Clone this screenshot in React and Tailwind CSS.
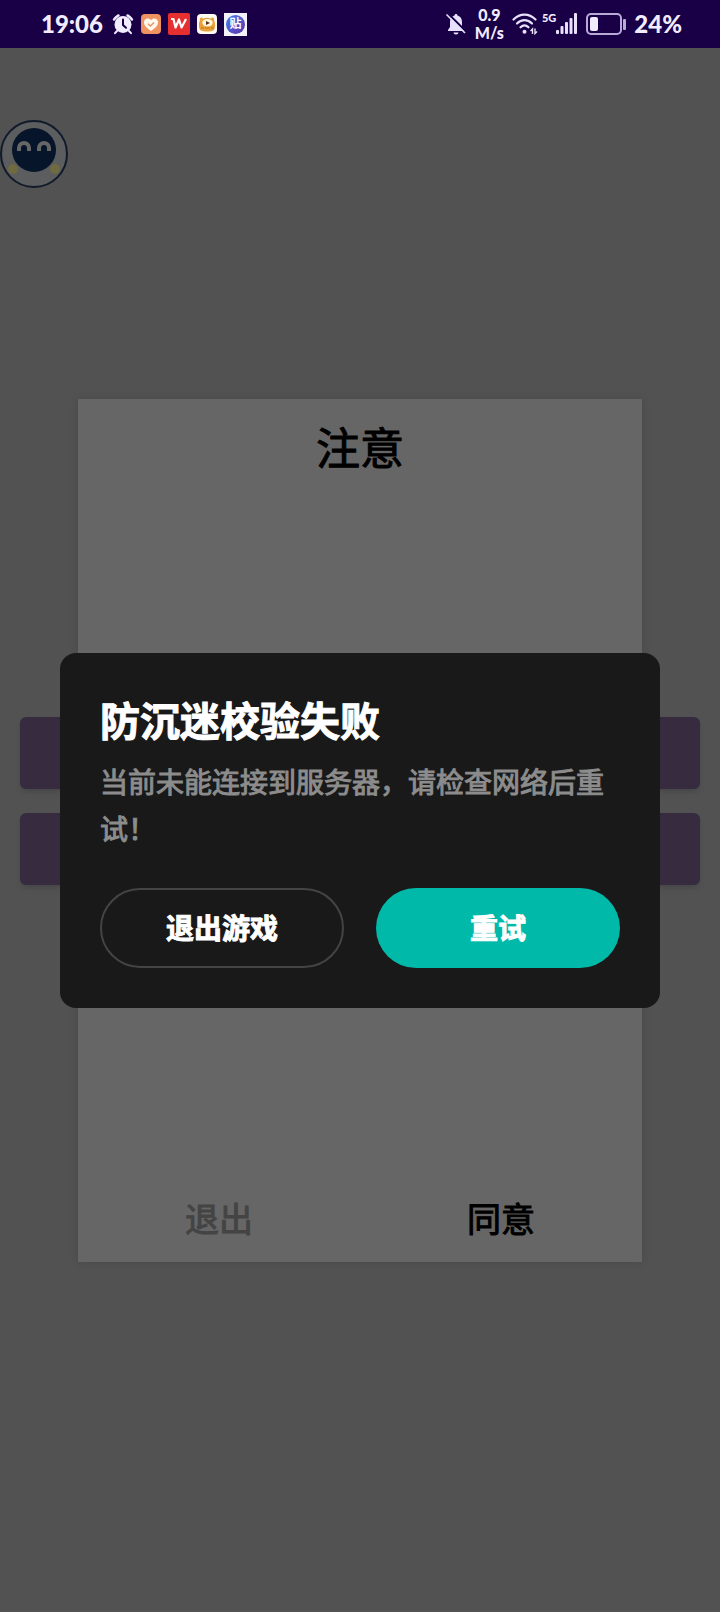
import { useState } from 'react';

function AlarmIcon() {
  return (
    <svg className="h-6 w-[22px]" viewBox="0 0 22 24" fill="none">
      <circle cx="11" cy="12.5" r="8.5" fill="#f1ecff" />
      <path d="M2 7.5A14 14 0 0 1 6.5 3.4M20 7.5A14 14 0 0 0 15.5 3.4" stroke="#f1ecff" strokeWidth="2.4" strokeLinecap="round" />
      <path d="M5 19l-2 2.2M17 19l2 2.2" stroke="#f1ecff" strokeWidth="2" strokeLinecap="round" />
      <path d="M11 7.5v5.5l3 2.8" stroke="#190046" strokeWidth="2" strokeLinecap="round" />
    </svg>
  );
}

function HealthIcon() {
  return (
    <svg className="size-5" viewBox="0 0 20 20" fill="none">
      <rect width="20" height="20" rx="4" fill="#ef9360" />
      <path d="M10 17C5 13.5 3 11.3 3 8.3C3 6 4.7 4.6 6.6 4.6C8 4.6 9.3 5.2 10 6.3C10.7 5.2 12 4.6 13.4 4.6C15.3 4.6 17 6 17 8.3C17 11.3 15 13.5 10 17Z" fill="#fff8ee" />
      <path d="M7 9.8l2.3 2.2L13 8.5" stroke="#ef9360" strokeWidth="1.5" />
    </svg>
  );
}

function OfficeIcon() {
  return (
    <svg className="size-[22px]" viewBox="0 0 22 22" fill="none">
      <rect width="22" height="22" rx="2" fill="#e5302f" />
      <path d="M3 6H5.5L7.5 14.5L11 6.500L13.500 14.5L18 6" stroke="#fff" strokeWidth="2.2" strokeLinejoin="round" />
    </svg>
  );
}

function TigerIcon() {
  return (
    <svg className="size-5" viewBox="0 0 20 20" fill="none">
      <rect width="20" height="20" rx="4" fill="#fdfaf4" />
      <path d="M3 6C2 3.5 5 2.5 6 4.5C8.5 3.5 11.5 3.5 14 4.5C15 2.5 18 3.5 17 6C18.5 9 18.5 13 17 16C13 18 7 18 3 16C1.5 13 1.5 9 3 6Z" fill="#e9a23a" />
      <ellipse cx="10.5" cy="8.8" rx="5.2" ry="3.8" fill="#fff6df" />
      <path d="M9 7l4 2l-4 2Z" fill="#5b3413" />
      <path d="M4 14h3M14 14h3M8 14h5" stroke="#b8741d" strokeWidth="1.2" />
    </svg>
  );
}

function ForumIcon() {
  return (
    <span className="flex size-[23px] items-center justify-center bg-[#f4f2fb]">
      <span className="flex size-[19px] items-center justify-center rounded-full bg-linear-to-br from-[#3b7cf0] to-[#5a2fa8] text-xs font-bold text-white">
        贴
      </span>
    </span>
  );
}

function MutedBellIcon() {
  return (
    <svg className="h-6 w-[22px]" viewBox="0 0 22 24" fill="none">
      <path d="M11 2C11.9 2 12.5 2.6 12.5 3.5C15.5 4.3 17 6.7 17 10V15L19 18V19H3V18L5 15V10C5 6.7 6.5 4.3 9.5 3.5C9.5 2.6 10.1 2 11 2Z" fill="#e8e1fb" />
      <path d="M8.5 20.5h5a2.5 2 0 0 1-5 0Z" fill="#e8e1fb" />
      <path d="M3 1.5L21.5 20" stroke="#190046" strokeWidth="2" />
      <path d="M1.5 2.5L20 21" stroke="#e8e1fb" strokeWidth="1.6" />
    </svg>
  );
}

function WifiIcon() {
  return (
    <svg className="h-6 w-[26px]" viewBox="0 0 26 24" fill="none">
      <g stroke="#e8e1fb" strokeWidth="2.2" strokeLinecap="round">
        <path d="M1.5 7.5C8 1 17 1 23.5 7.5" />
        <path d="M5 11.5C9.5 7 15.5 7 20 11.5" />
        <path d="M8.5 15.3C11 12.8 14 12.8 16.5 15.3" />
      </g>
      <circle cx="12.5" cy="19.8" r="2" fill="#e8e1fb" />
      <path d="M20.5 22v-5l-2 2M23 16.5v5l2-2" stroke="#e8e1fb" strokeWidth="1.4" />
    </svg>
  );
}

function SignalIcon() {
  return (
    <svg className="h-[22px] w-[22px]" viewBox="0 0 22 22" fill="#e8e1fb">
      <rect x="0" y="17" width="3" height="4" rx="1" />
      <rect x="4.5" y="13" width="3" height="8" rx="1" />
      <rect x="9" y="9" width="3" height="12" rx="1" />
      <rect x="13.5" y="5" width="3" height="16" rx="1" />
      <rect x="18" y="0" width="3" height="21" rx="1" />
    </svg>
  );
}

function BatteryIcon() {
  return (
    <svg className="h-[22px] w-10" viewBox="0 0 40 22" fill="none">
      <rect x="1" y="1" width="34" height="20" rx="4" stroke="#b9aad6" strokeWidth="2" />
      <rect x="4" y="4" width="8" height="14" rx="2" fill="#f1ecff" />
      <rect x="37" y="6" width="3" height="11" rx="1" fill="#b9aad6" />
    </svg>
  );
}

function StatusBar() {
  return (
    <header className="flex h-12 items-center justify-between bg-[#190046] pr-[38px] pl-[41px] text-[#f1ecff]">
      <div className="flex items-center gap-[7px]">
        <time className="w-16 font-[Lato,sans-serif] text-2xl leading-6 font-black">19:06</time>
        <AlarmIcon />
        <HealthIcon />
        <OfficeIcon />
        <TigerIcon />
        <ForumIcon />
      </div>
      <div className="flex items-center font-[Lato,sans-serif] font-black">
        <MutedBellIcon />
        <div className="mx-2 text-center text-base leading-[18px]">
          <p>0.9</p>
          <p>M/s</p>
        </div>
        <WifiIcon />
        <span className="mt-1 ml-1 self-start text-[11px] leading-4">5G</span>
        <SignalIcon />
        <span className="mr-2 ml-2">
          <BatteryIcon />
        </span>
        <span className="text-2xl leading-6">24%</span>
      </div>
    </header>
  );
}

function FloatingAvatar() {
  return (
    <svg className="size-[68px]" viewBox="0 0 68 68" fill="none">
      <circle cx="34" cy="34" r="33" fill="#5b5d5e" stroke="#101a2a" strokeWidth="2" />
      <circle cx="13" cy="49" r="5" fill="#6f6a40" />
      <circle cx="55" cy="49" r="5" fill="#6f6a40" />
      <circle cx="34" cy="30" r="22" fill="#07152a" />
      <path d="M19 31v-3a5 5 0 0 1 10 0v3M39 31v-3a5 5 0 0 1 10 0v3" stroke="#666" strokeWidth="4" />
    </svg>
  );
}

function NoticeCard() {
  return (
    <section className="mx-[78px] flex h-[863px] flex-col justify-between self-center bg-[#666] shadow-[0_0_8px_rgba(0,0,0,0.12)] [grid-area:1/1]">
      <h2 className="pt-4 text-center text-[44px] leading-[66px] text-black [-webkit-text-stroke:1px]">注意</h2>
      <div className="grid h-[84px] grid-cols-2 text-[34px] [-webkit-text-stroke:1px]">
        <button className="text-[#444]">退出</button>
        <button className="text-black">同意</button>
      </div>
    </section>
  );
}

function RetryDialog({ onExit, onRetry }) {
  return (
    <div
      role="alertdialog"
      aria-labelledby="dialog-title"
      aria-describedby="dialog-text"
      className="z-10 mx-[60px] self-center rounded-2xl bg-[#191919] p-10 [grid-area:1/1]"
    >
      <h1 id="dialog-title" className="text-[40px] leading-[56px] font-bold text-white [-webkit-text-stroke:1px]">
        防沉迷校验失败
      </h1>
      <p id="dialog-text" className="mt-[10px] text-[28px] leading-[47px] text-[#8c8c8c] [-webkit-text-stroke:1px]">
        当前未能连接到服务器，请检查网络后重试！
      </p>
      <div className="mt-[35px] grid grid-cols-2 gap-8 text-[28px] font-bold text-white [-webkit-text-stroke:1px]">
        <button onClick={onExit} className="h-20 rounded-full border-2 border-[#444]">
          退出游戏
        </button>
        <button onClick={onRetry} className="h-20 rounded-full bg-[#00b9a9]">
          重试
        </button>
      </div>
    </div>
  );
}

export default function App() {
  const [open, setOpen] = useState(true);

  return (
    <div className='flex min-h-screen flex-col bg-[#525252] font-["Noto_Sans","Noto_Sans_CJK_SC",sans-serif]'>
      <StatusBar />
      <main className="grid flex-1 grid-cols-1">
        <div className="pt-[72px] [grid-area:1/1]">
          <FloatingAvatar />
        </div>
        {/* page actions, mostly hidden behind the notice */}
        <div className="mb-[58px] flex flex-col gap-6 self-center px-5 [grid-area:1/1]">
          <button aria-label="开始" className="h-[72px] rounded-md bg-[#372c3f] shadow-md" />
          <button aria-label="设置" className="h-[72px] rounded-md bg-[#372c3f] shadow-md" />
        </div>
        <NoticeCard />
        {open && <RetryDialog onExit={() => setOpen(false)} onRetry={() => setOpen(true)} />}
      </main>
    </div>
  );
}
